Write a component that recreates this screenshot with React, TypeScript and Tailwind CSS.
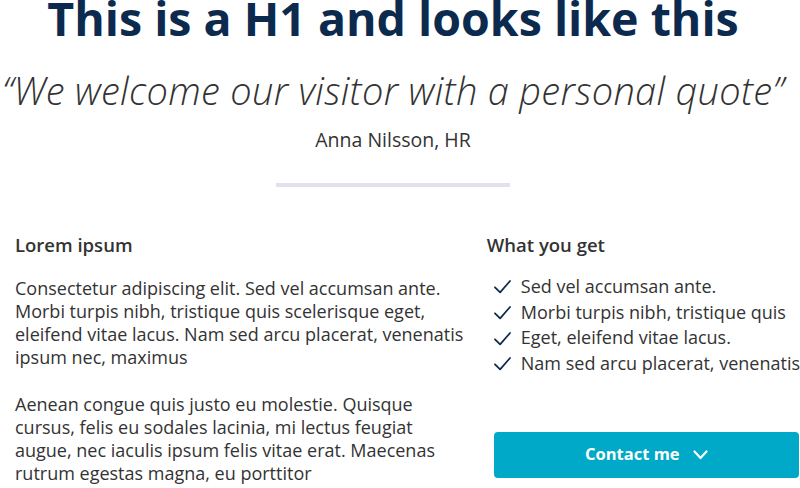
// App.tsx — quote hero with two-column intro
const checks = [
  'Sed vel accumsan ante.',
  'Morbi turpis nibh, tristique quis',
  'Eget, eleifend vitae lacus.',
  'Nam sed arcu placerat, venenatis',
];

function CheckIcon() {
  return (
    <svg className="w-[19px] h-[19px] shrink-0 text-[#0b2a4e]" viewBox="0 0 24 24" fill="none" stroke="currentColor" strokeWidth={2.2} strokeLinecap="round" strokeLinejoin="round">
      <path d="M2.5 13l6.5 6.5L21.5 5" />
    </svg>
  );
}

export default function App() {
  return (
    <div className="w-[800px] h-[488px] overflow-hidden bg-white text-[#333333] font-['Open_Sans',sans-serif]">
      {/* Hero */}
      <header className="flex flex-col items-center pr-[14px]">
        <h1 className="text-[46.5px] leading-[37px] font-bold text-[#0b2a4e] whitespace-nowrap">
          This is a H1 and looks like this
        </h1>
        <p className="mt-[31px] text-[38px] leading-[44px] italic font-light tracking-[0.3px] text-[#333333] whitespace-nowrap">
          “We welcome our visitor with a personal quote”
        </p>
        <p className="mt-[16px] text-[19.5px] leading-[24px] text-[#333333]">Anna Nilsson, HR</p>
        <div className="mt-[31px] w-[234px] h-[4px] bg-[#e1e1ef]" />
      </header>

      {/* Columns */}
      <main className="mt-[46px] flex">
        <section className="w-[487px] pl-[15px] pr-[17px]">
          <h2 className="text-[18.5px] leading-[24px] font-semibold text-[#333333]">Lorem ipsum</h2>
          <p className="mt-[20px] text-[18px] leading-[23px]">
            Consectetur adipiscing elit. Sed vel accumsan ante. Morbi turpis nibh, tristique quis scelerisque eget,
            eleifend vitae lacus. Nam sed arcu placerat, venenatis ipsum nec, maximus
          </p>
          <p className="mt-[24px] text-[18px] leading-[23px]">
            Aenean congue quis justo eu molestie. Quisque cursus, felis eu sodales lacinia, mi lectus feugiat augue, nec
            iaculis ipsum felis vitae erat. Maecenas rutrum egestas magna, eu porttitor
          </p>
        </section>

        <section className="flex-1 flex flex-col">
          <h2 className="text-[18.5px] leading-[24px] font-semibold text-[#333333]">What you get</h2>
          <ul className="mt-[17px] flex flex-col pl-[6px]">
            {checks.map((c) => (
              <li key={c} className="flex items-center gap-[9px] text-[18px] leading-[25.7px] whitespace-nowrap">
                <CheckIcon />
                <span>{c}</span>
              </li>
            ))}
          </ul>
          <button className="mt-[55px] ml-[7px] h-[46px] w-[305px] rounded-[4px] bg-[#00a9c7] text-white text-[16.5px] font-bold flex items-center justify-center gap-[13px]">
            Contact me
            <svg className="w-[15px] h-[10px]" viewBox="0 0 15 10" fill="none" stroke="currentColor" strokeWidth={2.2} strokeLinecap="round" strokeLinejoin="round">
              <path d="M1.5 1.5l6 6.5 6-6.5" />
            </svg>
          </button>
        </section>
      </main>
    </div>
  );
}
